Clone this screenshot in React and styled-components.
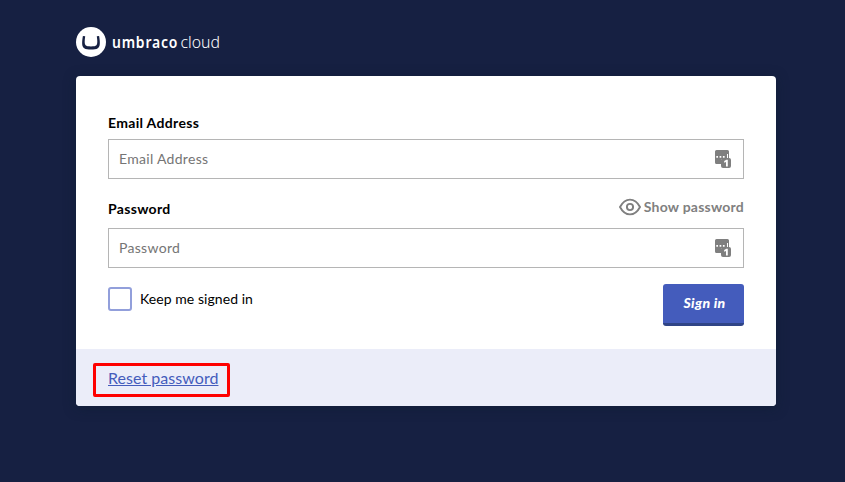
import React from 'react';
import styled, { createGlobalStyle } from 'styled-components';

const GlobalStyle = createGlobalStyle`
  *, *::before, *::after { box-sizing: border-box; }
  body { margin: 0; background: #162042; font-family: Lato, sans-serif; color: #000; }
`;

const Page = styled.main`
  width: 845px;
  height: 482px;
  padding: 26px 0 0 76px;
  background: #162042;
  overflow: hidden;
`;

const Brand = styled.header`
  height: 50px;
  svg { display: block; }
`;

const Card = styled.form`
  width: 700px;
  height: 330px;
  background: #fff;
  border-radius: 4px;
  box-shadow: 0 2px 12px rgba(14, 30, 50, 0.6);
  overflow: hidden;
  display: flex;
  flex-direction: column;
`;

const Fields = styled.div`
  flex: 1;
  padding: 37px 32px 0;
`;

const LabelRow = styled.div`
  display: flex;
  justify-content: space-between;
  height: ${(p) => p.$height}px;
`;

const Label = styled.label`
  padding-top: ${(p) => p.$top || 0}px;
  font-size: 14px;
  line-height: 20px;
  font-weight: 700;
  letter-spacing: 0.32px;
`;

const Reveal = styled.button`
  display: flex;
  align-items: center;
  gap: 3px;
  height: 20px;
  margin: 18px 0 0;
  padding: 0;
  border: 0;
  background: none;
  color: #808080;
  font: 700 14px/20px Lato, sans-serif;
  letter-spacing: 0.23px;
`;

const InputBox = styled.div`
  display: flex;
  align-items: center;
  height: 40px;
  padding: 0 12px 0 10px;
  border: 1px solid #b5b5b5;
  background: #fff;
`;

const Input = styled.input`
  flex: 1;
  height: 38px;
  padding: 0 0 2px;
  border: 0;
  outline: 0;
  background: none;
  font: 400 14px/20px Lato, sans-serif;
  letter-spacing: 0.3px;
  &::placeholder { color: #757575; opacity: 1; }
`;

const Actions = styled.div`
  display: flex;
  justify-content: space-between;
  align-items: flex-start;
  padding-top: 16px;
`;

const Remember = styled.label`
  display: flex;
  align-items: center;
  gap: 8px;
  margin-top: 3px;
  font-size: 14px;
  line-height: 24px;
  letter-spacing: 0.06px;
`;

const Checkbox = styled.input`
  appearance: none;
  width: 24px;
  height: 24px;
  margin: 0;
  border: 2px solid #929fdb;
  border-radius: 3px;
  background: #fff;
`;

const Submit = styled.button`
  width: 81px;
  height: 42px;
  padding: 0 0 1px 2px;
  border: 0;
  border-bottom: 3px solid #2f4486;
  border-radius: 3px;
  background: #445cbc;
  color: #fff;
  font: italic 900 14px/20px Lato, sans-serif;
  letter-spacing: 0.35px;
`;

const Footer = styled.footer`
  height: 57px;
  padding: 14px 17px;
  background: #ebedf9;
`;

const Highlight = styled.div`
  width: 137px;
  height: 34px;
  padding-left: 12px;
  border: 3px solid #fe0000;
  border-radius: 2px;
`;

const ResetLink = styled.a`
  display: block;
  color: #445cbc;
  font-size: 16px;
  line-height: 24px;
  letter-spacing: 0.04px;
  text-decoration: underline;
`;

function Logo() {
  return (
    <svg width="150" height="32" viewBox="0 0 150 32" aria-label="umbraco cloud">
      <circle cx="15" cy="16" r="15" fill="#fff" />
      <path
        d="M6.9 10C5.8 16.5 5.7 20.7 8.2 22.3C9.7 23.3 12.2 23.6 15 23.6S20.3 23.3 21.8 22.3C24.3 20.7 24.2 16.5 23.1 10L20.8 10.3C21.5 15 21.6 18 20.4 19.3C19.6 20.2 17.8 20.4 15 20.4S10.4 20.2 9.6 19.3C8.4 18 8.5 15 9.2 10.3Z"
        fill="#162042"
      />
      <g transform="translate(36 22) scale(0.9 1)" fill="#fff" fontFamily="Noto Sans, sans-serif" fontSize="15.5">
        <text fontWeight="600" letterSpacing="0.9" textLength="73.5" lengthAdjust="spacing">umbraco</text>
      </g>
      <text x="104.5" y="22" fill="#fff" fontFamily="Noto Sans, sans-serif" fontSize="16.5" fontWeight="300" textLength="39.5" lengthAdjust="spacingAndGlyphs">cloud</text>
    </svg>
  );
}

function EyeIcon() {
  return (
    <svg width="22" height="18" viewBox="0 0 22 18" fill="none" stroke="#808080" strokeWidth="1.9">
      <path d="M1 9C3.5 4.2 6.8 1.6 11 1.6S18.5 4.2 21 9C18.5 13.8 15.2 16.4 11 16.4S3.5 13.8 1 9Z" />
      <circle cx="11" cy="9" r="3.1" />
    </svg>
  );
}

function VaultIcon() {
  return (
    <svg width="16" height="18" viewBox="0 0 16 18">
      <path d="M1.5 0H12.5Q14 0 14 1.5V9H6V14H1.5Q0 14 0 12.5V1.5Q0 0 1.5 0Z" fill="#7f7f7f" />
      <path d="M1.3 6h1.7v1.8H1.3zM4.6 6h1.7v1.8H4.6zM7.9 6h1.7v1.8H7.9zM12 4h1v4h-1z" fill="#fff" />
      <rect x="6" y="8" width="10" height="10" rx="2" fill="#7f7f7f" />
      <path d="M9.2 11.1L11.4 9.8H12.8V16.5H11V12.1L9.2 12.7Z" fill="#fff" />
    </svg>
  );
}

function Field({ id, type, placeholder }) {
  return (
    <InputBox>
      <Input id={id} type={type} placeholder={placeholder} />
      <VaultIcon />
    </InputBox>
  );
}

export default function App() {
  return (
    <Page>
      <GlobalStyle />
      <Brand><Logo /></Brand>
      <Card>
        <Fields>
          <LabelRow $height={26}>
            <Label htmlFor="email">Email Address</Label>
          </LabelRow>
          <Field id="email" type="email" placeholder="Email Address" />
          <LabelRow $height={49}>
            <Label htmlFor="password" $top={20}>Password</Label>
            <Reveal type="button"><EyeIcon />Show password</Reveal>
          </LabelRow>
          <Field id="password" type="password" placeholder="Password" />
          <Actions>
            <Remember><Checkbox type="checkbox" />Keep me signed in</Remember>
            <Submit type="button">Sign in</Submit>
          </Actions>
        </Fields>
        <Footer>
          <Highlight><ResetLink href="#reset">Reset password</ResetLink></Highlight>
        </Footer>
      </Card>
    </Page>
  );
}
